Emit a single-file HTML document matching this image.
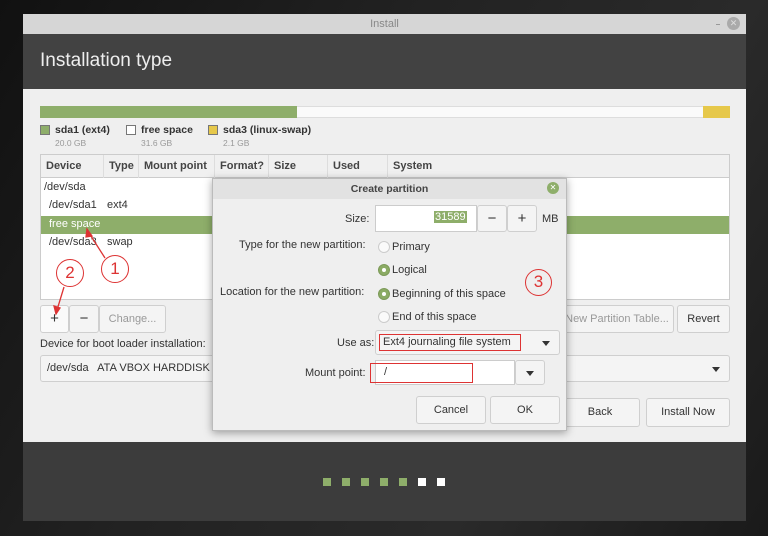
<!DOCTYPE html>
<html><head><style>
*{box-sizing:border-box;margin:0;padding:0}
body{width:768px;height:536px;background:#1c1c1c;font-family:"Liberation Sans",sans-serif;font-size:11px;color:#333;position:relative;overflow:hidden}
.a{position:absolute;white-space:nowrap}
.btn{position:absolute;background:#f4f4f4;border:1px solid #cfcfcf;border-radius:3px;text-align:center;color:#333;white-space:nowrap;overflow:hidden}
.col{position:absolute;top:0;height:23px;line-height:23px;border-right:1px solid #ddd;padding-left:5px;font-weight:bold;color:#444;white-space:nowrap}
.radio{position:absolute;width:12px;height:12px;border-radius:50%;border:1px solid #ccc;background:#fafafa}
.radio.on{background:#8bab64;border-color:#7c9a58}
.radio.on::after{content:"";position:absolute;left:3px;top:3px;width:4px;height:4px;border-radius:50%;background:#fff}
.circ{position:absolute;border:1.5px solid #d33;border-radius:50%;color:#d33;text-align:center;font-size:17px;font-family:"Liberation Sans",sans-serif}
.tri{position:absolute;width:0;height:0;border-left:4px solid transparent;border-right:4px solid transparent;border-top:5px solid #333}
</style></head><body>
<div class="a" style="left:0;top:0;width:768px;height:536px;background:linear-gradient(120deg,#111 0%,#222 40%,#2a2a2a 70%,#1a1a1a 100%)"></div>
<div class="a" style="left:23px;top:14px;width:723px;height:507px;background:#3c3c3c"></div>
<div class="a" style="left:23px;top:14px;width:723px;height:20px;background:#d6d6d6;text-align:center;line-height:20px;color:#888;font-size:11px">Install</div>
<div class="a" style="left:716px;top:24px;width:4px;height:1px;background:#999"></div>
<div class="a" style="left:727px;top:17px;width:13px;height:13px;border-radius:50%;background:#aaa;color:#ddd;font-size:9px;line-height:13px;text-align:center">✕</div>
<div class="a" style="left:23px;top:34px;width:723px;height:55px;background:#424242"></div>
<div class="a" style="left:40px;top:50px;color:#eee;font-size:19px">Installation type</div>
<div class="a" style="left:23px;top:89px;width:723px;height:353px;background:#efefef"></div>
<div class="a" style="left:40px;top:106px;width:690px;height:12px;background:#fafafa;border:1px solid #ddd"></div>
<div class="a" style="left:40px;top:106px;width:257px;height:12px;background:#8eae6a"></div>
<div class="a" style="left:703px;top:106px;width:27px;height:12px;background:#e6c84a"></div>
<div class="a" style="left:40px;top:125px;width:10px;height:10px;background:#8eae6a;border:1px solid #777"></div>
<div class="a" style="left:55px;top:124px;font-weight:bold;font-size:10.5px">sda1 (ext4)</div>
<div class="a" style="left:55px;top:138px;font-size:8.5px;color:#999">20.0 GB</div>
<div class="a" style="left:126px;top:125px;width:10px;height:10px;background:#fff;border:1px solid #777"></div>
<div class="a" style="left:141px;top:124px;font-weight:bold;font-size:10.5px">free space</div>
<div class="a" style="left:141px;top:138px;font-size:8.5px;color:#999">31.6 GB</div>
<div class="a" style="left:208px;top:125px;width:10px;height:10px;background:#e6c84a;border:1px solid #777"></div>
<div class="a" style="left:223px;top:124px;font-weight:bold;font-size:10.5px">sda3 (linux-swap)</div>
<div class="a" style="left:223px;top:138px;font-size:8.5px;color:#999">2.1 GB</div>
<div class="a" style="left:40px;top:154px;width:690px;height:146px;background:#fff;border:1px solid #ccc">
 <div class="a" style="left:0;top:0;width:688px;height:23px;background:#f0f0f0;border-bottom:1px solid #ccc"></div>
 <div class="col" style="left:0;width:63px">Device</div>
 <div class="col" style="left:63px;width:35px">Type</div>
 <div class="col" style="left:98px;width:76px">Mount point</div>
 <div class="col" style="left:174px;width:54px">Format?</div>
 <div class="col" style="left:228px;width:59px">Size</div>
 <div class="col" style="left:287px;width:60px">Used</div>
 <div class="col" style="left:347px;width:200px;border:none">System</div>
 <div class="a" style="left:3px;top:26px">/dev/sda</div>
 <div class="a" style="left:8px;top:44px">/dev/sda1</div><div class="a" style="left:66px;top:44px">ext4</div>
 <div class="a" style="left:0;top:61px;width:688px;height:18px;background:#8eae6a"></div>
 <div class="a" style="left:8px;top:63px;color:#fff">free space</div>
 <div class="a" style="left:8px;top:81px">/dev/sda3</div><div class="a" style="left:66px;top:81px">swap</div>
</div>
<div class="btn" style="left:40px;top:305px;width:29px;height:28px;line-height:26px;font-size:15px;background:#fafafa">+</div>
<div class="btn" style="left:69px;top:305px;width:30px;height:28px;line-height:26px;font-size:15px">−</div>
<div class="btn" style="left:99px;top:305px;width:67px;height:28px;line-height:26px;color:#999">Change...</div>
<div class="btn" style="left:560px;top:305px;width:114px;height:28px;line-height:26px;color:#999">New Partition Table...</div>
<div class="btn" style="left:677px;top:305px;width:53px;height:28px;line-height:26px">Revert</div>
<div class="a" style="left:40px;top:338px">Device for boot loader installation:</div>
<div class="btn" style="left:40px;top:355px;width:690px;height:27px;text-align:left;padding-left:6px;line-height:25px">/dev/sda &nbsp; ATA VBOX HARDDISK</div>
<div class="tri" style="left:712px;top:367px"></div>
<div class="btn" style="left:560px;top:398px;width:80px;height:29px;line-height:27px">Back</div>
<div class="btn" style="left:646px;top:398px;width:84px;height:29px;line-height:27px">Install Now</div>
<div class="a" style="left:323px;top:478px;width:8px;height:8px;background:#8eae6a"></div>
<div class="a" style="left:342px;top:478px;width:8px;height:8px;background:#8eae6a"></div>
<div class="a" style="left:361px;top:478px;width:8px;height:8px;background:#8eae6a"></div>
<div class="a" style="left:380px;top:478px;width:8px;height:8px;background:#8eae6a"></div>
<div class="a" style="left:399px;top:478px;width:8px;height:8px;background:#8eae6a"></div>
<div class="a" style="left:418px;top:478px;width:8px;height:8px;background:#fff"></div>
<div class="a" style="left:437px;top:478px;width:8px;height:8px;background:#fff"></div>
<div class="a" style="left:212px;top:178px;width:355px;height:253px;background:#efefef;border:1px solid #bbb;box-shadow:0 2px 8px rgba(0,0,0,.35)"></div>
<div class="a" style="left:213px;top:179px;width:353px;height:20px;background:#e2e2e2;text-align:center;line-height:20px;font-weight:bold;font-size:10.5px;color:#444">Create partition</div>
<div class="a" style="left:547px;top:182px;width:12px;height:12px;border-radius:50%;background:#8eae6a;color:#fff;font-size:8px;line-height:12px;text-align:center">✕</div>
<div class="a" style="left:345px;top:213px">Size:</div>
<div class="a" style="left:375px;top:205px;width:102px;height:27px;background:#fff;border:1px solid #ccc"></div>
<div class="a" style="left:434px;top:211px;background:#8eae6a;color:#fff;padding:0 1px">31589</div>
<div class="btn" style="left:477px;top:205px;width:30px;height:27px;line-height:25px;font-size:15px">−</div>
<div class="btn" style="left:507px;top:205px;width:30px;height:27px;line-height:25px;font-size:15px">+</div>
<div class="a" style="left:542px;top:213px">MB</div>
<div class="a" style="left:239px;top:239px">Type for the new partition:</div>
<div class="radio" style="left:378px;top:241px"></div><div class="a" style="left:392px;top:241px">Primary</div>
<div class="radio on" style="left:378px;top:264px"></div><div class="a" style="left:392px;top:264px">Logical</div>
<div class="a" style="left:220px;top:286px">Location for the new partition:</div>
<div class="radio on" style="left:378px;top:288px"></div><div class="a" style="left:392px;top:288px">Beginning of this space</div>
<div class="radio" style="left:378px;top:311px"></div><div class="a" style="left:392px;top:311px">End of this space</div>
<div class="circ" style="left:525px;top:269px;width:27px;height:27px;line-height:24px">3</div>
<div class="a" style="left:337px;top:337px">Use as:</div>
<div class="btn" style="left:375px;top:330px;width:185px;height:25px"></div>
<div class="a" style="left:379px;top:334px;width:142px;height:17px;border:1.5px solid #d33;padding-left:3px;line-height:14px">Ext4 journaling file system</div>
<div class="tri" style="left:542px;top:341px"></div>
<div class="a" style="left:305px;top:367px">Mount point:</div>
<div class="a" style="left:375px;top:360px;width:140px;height:25px;background:#fff;border:1px solid #ccc"></div>
<div class="a" style="left:370px;top:363px;width:103px;height:20px;border:1.5px solid #d33;padding-left:13px;line-height:16px">/</div>
<div class="btn" style="left:515px;top:360px;width:30px;height:25px"></div>
<div class="tri" style="left:526px;top:371px"></div>
<div class="btn" style="left:416px;top:396px;width:70px;height:28px;line-height:26px">Cancel</div>
<div class="btn" style="left:490px;top:396px;width:70px;height:28px;line-height:26px">OK</div>
<div class="circ" style="left:101px;top:255px;width:28px;height:28px;line-height:25px">1</div>
<div class="circ" style="left:56px;top:259px;width:28px;height:28px;line-height:25px">2</div>
<svg class="a" style="left:0;top:0" width="768" height="536"><g stroke="#d33" stroke-width="1.3" fill="#d33">
<line x1="105" y1="258" x2="89" y2="233"/><polygon points="87,229 92,236 86,237"/>
<line x1="64" y1="287" x2="57" y2="310"/><polygon points="56,314 54,306 60,308"/></g></svg>
</body></html>
